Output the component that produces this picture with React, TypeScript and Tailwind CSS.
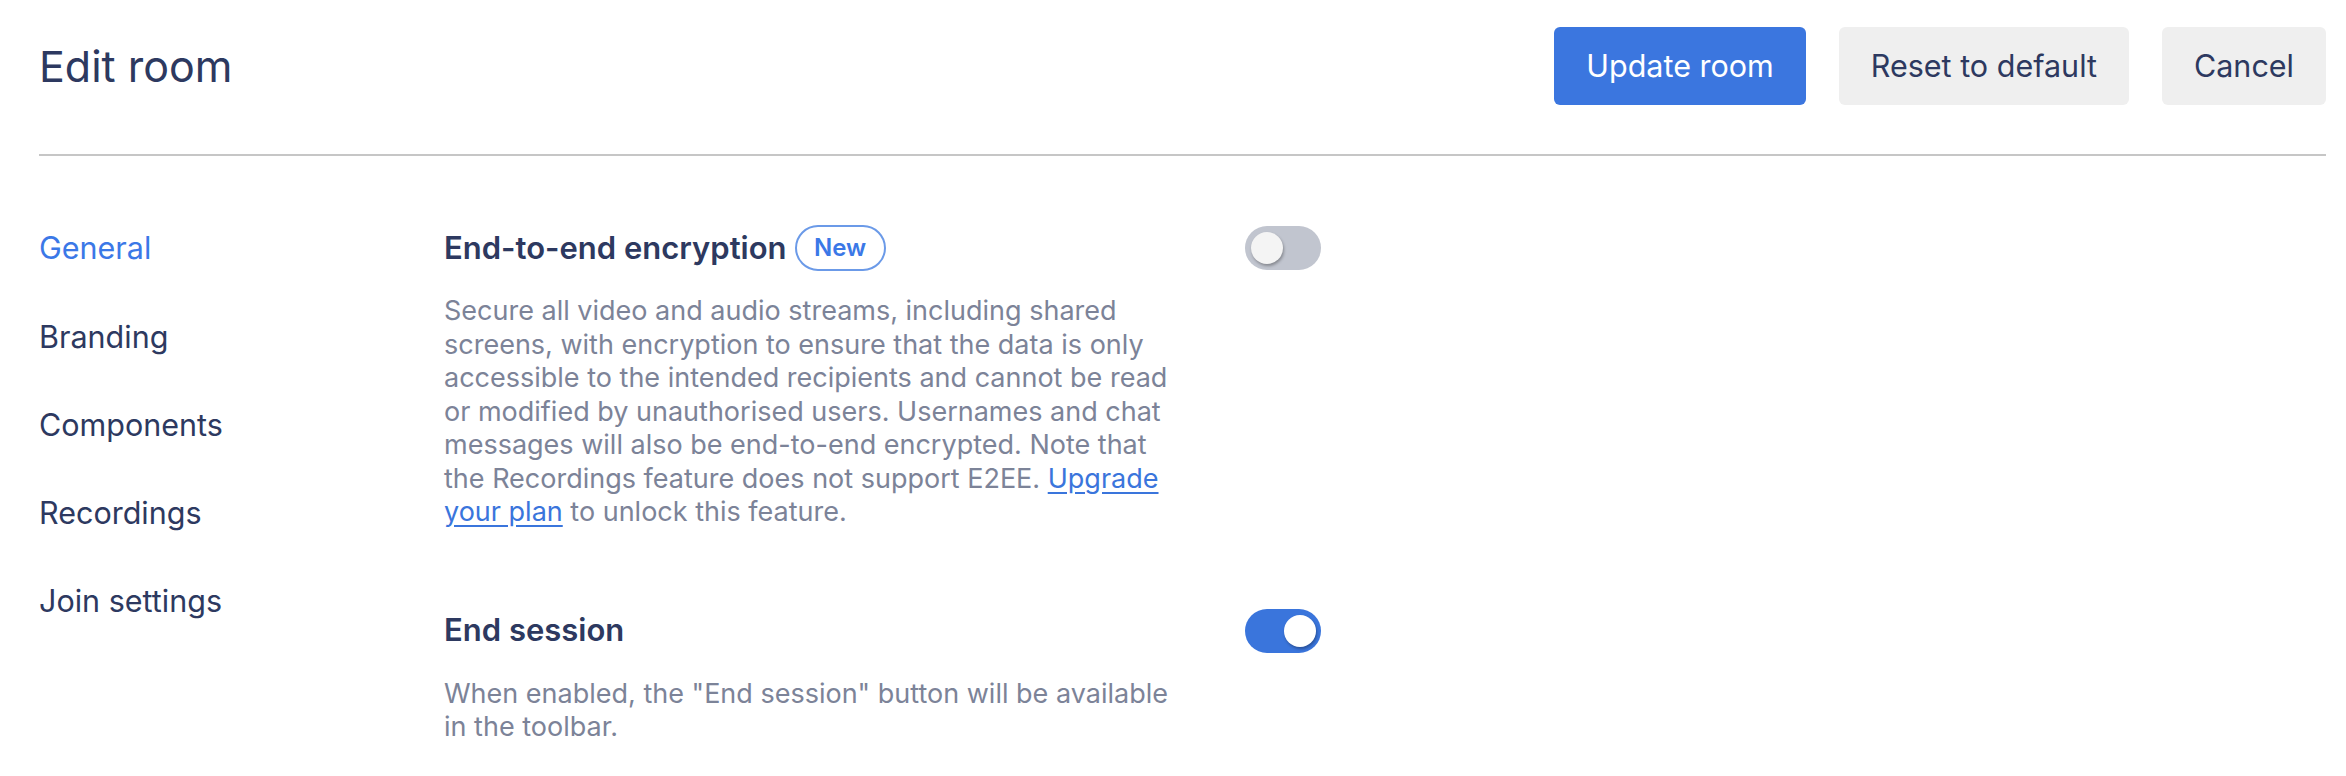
import { useState } from 'react'

const navItems = ['General', 'Branding', 'Components', 'Recordings', 'Join settings']

function Toggle({ on, onChange }: { on: boolean; onChange: () => void }) {
  return (
    <button
      type="button"
      onClick={onChange}
      className={`flex h-[44px] w-[76px] shrink-0 items-center rounded-full px-[6px] ${
        on ? 'justify-end bg-[#3a75dc] pr-[5px]' : 'justify-start bg-[#c1c5cf]'
      }`}
    >
      <span
        className={`block h-[32px] w-[32px] rounded-full shadow-[1px_2px_3px_rgba(0,0,0,0.3)] ${
          on ? 'bg-white' : 'bg-[#f4f4f4]'
        }`}
      />
    </button>
  )
}

export default function App() {
  const [e2ee, setE2ee] = useState(false)
  const [endSession, setEndSession] = useState(true)

  return (
    <div className="min-h-screen bg-white pl-[39px] pr-[20px] font-['Inter',sans-serif] text-[#2d3960]">
      <header className="flex items-center justify-between border-b-2 border-[#c6c6c6] pt-[27px] pb-[49px]">
        <h1 className="text-[43px] leading-none font-normal">Edit room</h1>
        <div className="flex gap-[33px]">
          <button className="h-[78px] rounded-[6px] bg-[#3b76df] px-[32px] text-[30.5px] text-white">
            Update room
          </button>
          <button className="h-[78px] rounded-[6px] bg-[#efefef] px-[32px] text-[30.5px]">
            Reset to default
          </button>
          <button className="h-[78px] rounded-[6px] bg-[#efefef] px-[32px] text-[30.5px]">
            Cancel
          </button>
        </div>
      </header>

      <div className="flex">
        <nav className="w-[405px] shrink-0 pt-[48px]">
          <ul>
            {navItems.map((item, i) => (
              <li
                key={item}
                className={`flex h-[88.3px] items-center text-[30.5px] ${i === 0 ? 'text-[#3b78e7]' : ''}`}
              >
                {item}
              </li>
            ))}
          </ul>
        </nav>

        <main className="w-[877px] pt-[69px]">
          <section>
            <div className="flex h-[46px] items-center justify-between">
              <div className="flex items-center">
                <h2 className="text-[31px] font-semibold">End-to-end encryption</h2>
                <span className="ml-[8px] flex h-[46px] w-[91px] items-center justify-center rounded-full border-2 border-[#6b9ae8] text-[24px] font-semibold text-[#3b78e7]">
                  New
                </span>
              </div>
              <Toggle on={e2ee} onChange={() => setE2ee(!e2ee)} />
            </div>
            <p className="mt-[23px] w-[745px] text-[27px] leading-[33.5px] text-[#7c8398]">
              Secure all video and audio streams, including shared screens, with encryption to
              ensure that the data is only accessible to the intended recipients and cannot be
              read or modified by unauthorised users. Usernames and chat messages will also be
              end-to-end encrypted. Note that the Recordings feature does not support E2EE.{' '}
              <a href="#" className="text-[#3a75dc] underline underline-offset-4">
                Upgrade your plan
              </a>{' '}
              to unlock this feature.
            </p>
          </section>

          <section className="mt-[79px]">
            <div className="flex h-[46px] items-center justify-between">
              <h2 className="text-[31px] font-semibold">End session</h2>
              <Toggle on={endSession} onChange={() => setEndSession(!endSession)} />
            </div>
            <p className="mt-[23px] w-[745px] text-[27px] leading-[33.5px] text-[#7c8398]">
              When enabled, the "End session" button will be available in the toolbar.
            </p>
          </section>
        </main>
      </div>
    </div>
  )
}
